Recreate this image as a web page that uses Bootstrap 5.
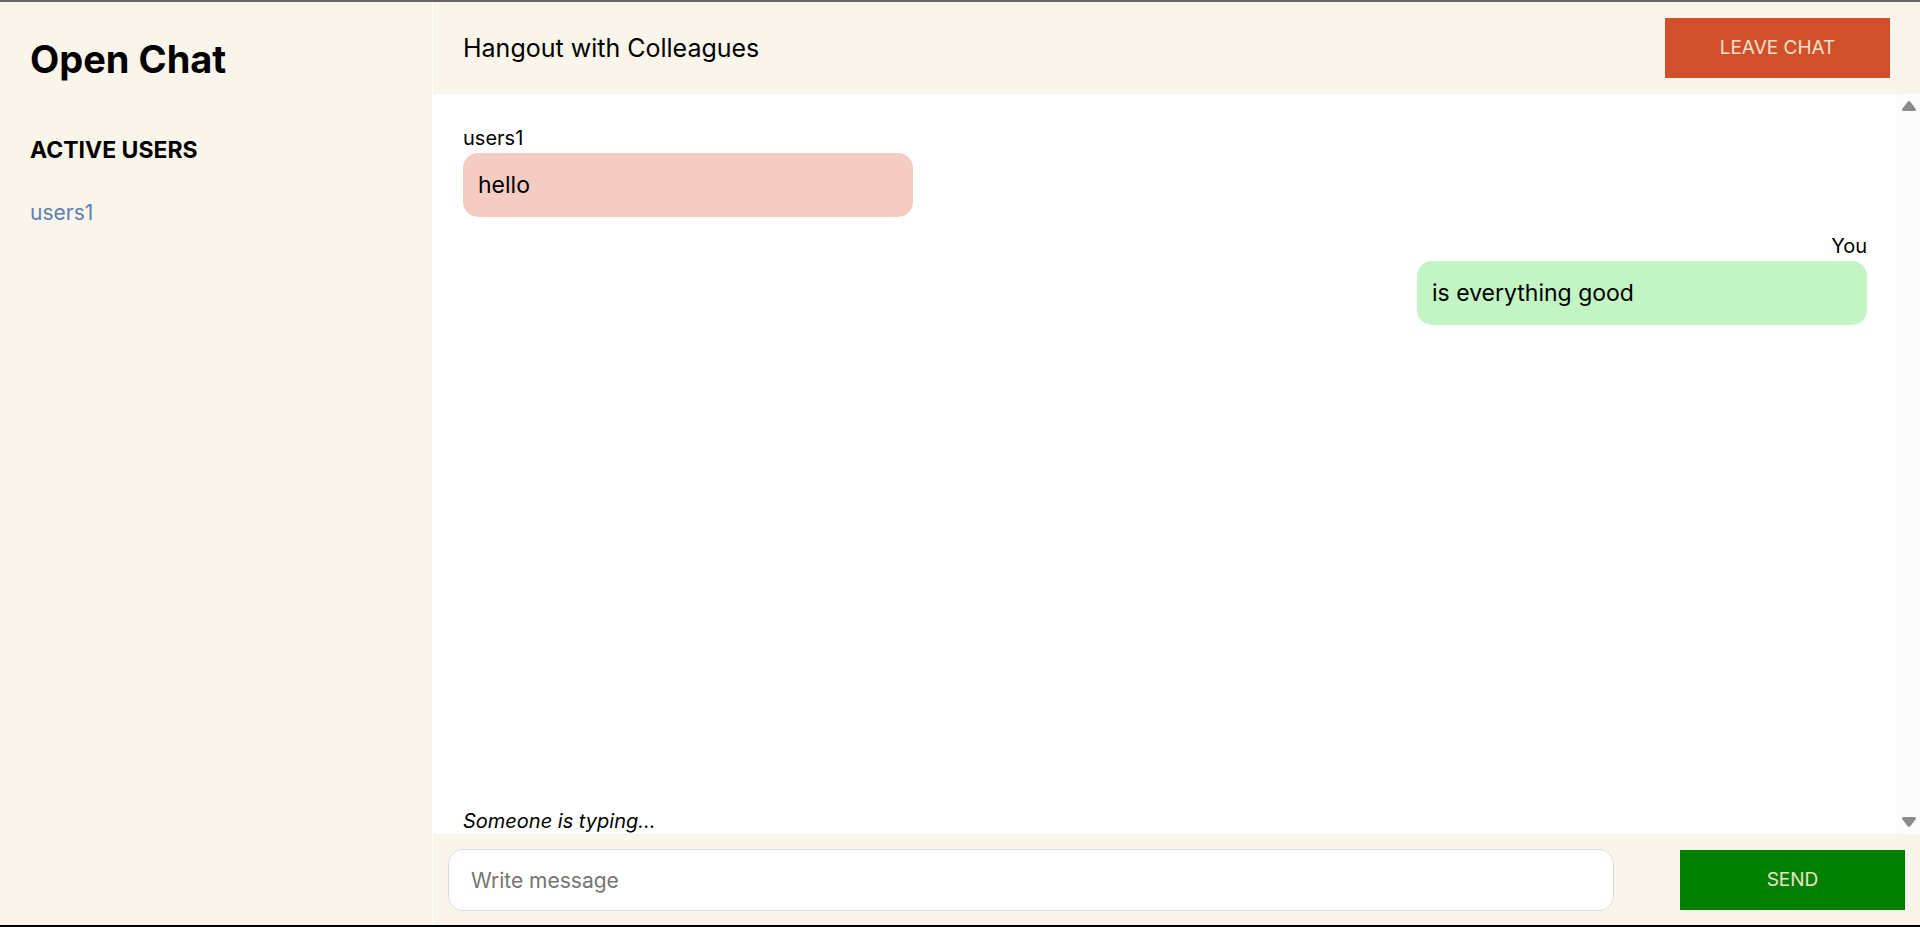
<!DOCTYPE html>
<html lang="en">
<head>
<meta charset="utf-8">
<meta name="viewport" content="width=device-width, initial-scale=1">
<title>Open Chat</title>
<link href="https://cdn.jsdelivr.net/npm/bootstrap@5.3.0/dist/css/bootstrap.min.css" rel="stylesheet">
<style>
  body { font-family: Inter, "Open Sans", sans-serif; font-size: 20px; line-height: 29px; color: #000; background: #fff; }
  .chat-app { border-top: 2px solid #666; border-bottom: 2px solid #000; }
  .cream { background: #faf5ea; }
  .sidebar { width: 22.5%; padding: 30px; }
  .brand { font-size: 38px; line-height: 55px; margin-bottom: 48px; }
  .section-title { font-size: 23px; line-height: 30px; margin-bottom: 32px; }
  .user-link { font-size: 21px; line-height: 32px; color: #5b7fb0; }
  .chat-pane { margin-left: 1px; }
  .chat-header { padding: 16px 30px; }
  .room-title { font-size: 25px; line-height: 38px; }
  .action-btn { width: 225px; height: 60px; border: 0; border-radius: 0; font-size: 19px; }
  .btn-leave, .btn-leave:hover { background: #d1502b; color: #f0e2c8; }
  .btn-send, .btn-send:hover { background: #008000; color: #f0e2c8; }
  .messages { padding: 30px 30px 0; }
  .message { width: 450px; margin-bottom: 15px; }
  .bubble { padding: 15px; font-size: 23px; line-height: 34px; border-radius: 15px; }
  .bubble-in { background: #f4ccc2; }
  .bubble-out { background: #c3f4c3; }
  .typing { line-height: 25px; }
  .scroll-rail { width: 23px; padding: 7px 0; background: #fcfcfc; }
  .chat-footer { padding: 15px 15px 14px; gap: 66px; }
  .message-input, .message-input:focus { height: 62px; padding: 0 22px; font-size: 21px; color: #000; border: 1px solid #ddd; border-radius: 15px; background: #fff; }
  .message-input::placeholder { color: #757575; }
</style>
</head>
<body>
<div class="chat-app d-flex vh-100">
  <aside class="sidebar cream flex-shrink-0">
    <h1 class="brand fw-bold">Open Chat</h1>
    <h2 class="section-title fw-bold">ACTIVE USERS</h2>
    <ul class="list-unstyled mb-0">
      <li><a class="user-link text-decoration-none" href="#">users1</a></li>
    </ul>
  </aside>
  <main class="chat-pane d-flex flex-column flex-grow-1">
    <header class="chat-header cream d-flex align-items-center justify-content-between">
      <p class="room-title mb-0">Hangout with Colleagues</p>
      <button type="button" class="btn action-btn btn-leave">LEAVE CHAT</button>
    </header>
    <div class="d-flex flex-grow-1">
      <section class="messages d-flex flex-column flex-grow-1">
        <div class="message">
          <div>users1</div>
          <div class="bubble bubble-in">hello</div>
        </div>
        <div class="message align-self-end">
          <div class="text-end">You</div>
          <div class="bubble bubble-out">is everything good</div>
        </div>
        <div class="typing fst-italic mt-auto">Someone is typing...</div>
      </section>
      <div class="scroll-rail d-flex flex-column justify-content-between align-items-center" aria-hidden="true">
        <svg width="14" height="10" viewBox="0 0 14 10"><path d="M5.6.8Q7-.7 8.4.8L13.6 7.7Q14.5 10 12.6 10H1.4Q-.5 10 .4 7.7Z" fill="#8b8b8b"/></svg>
        <svg width="14" height="10" viewBox="0 0 14 10"><path d="M5.6 9.2Q7 10.7 8.4 9.2L13.6 2.3Q14.5 0 12.6 0H1.4Q-.5 0 .4 2.3Z" fill="#8b8b8b"/></svg>
      </div>
    </div>
    <form class="chat-footer cream d-flex align-items-center">
      <input type="text" class="form-control message-input flex-grow-1" placeholder="Write message" aria-label="Write message">
      <button type="button" class="btn action-btn btn-send flex-shrink-0">SEND</button>
    </form>
  </main>
</div>
<script src="https://cdn.jsdelivr.net/npm/bootstrap@5.3.0/dist/js/bootstrap.bundle.min.js"></script>
</body>
</html>
